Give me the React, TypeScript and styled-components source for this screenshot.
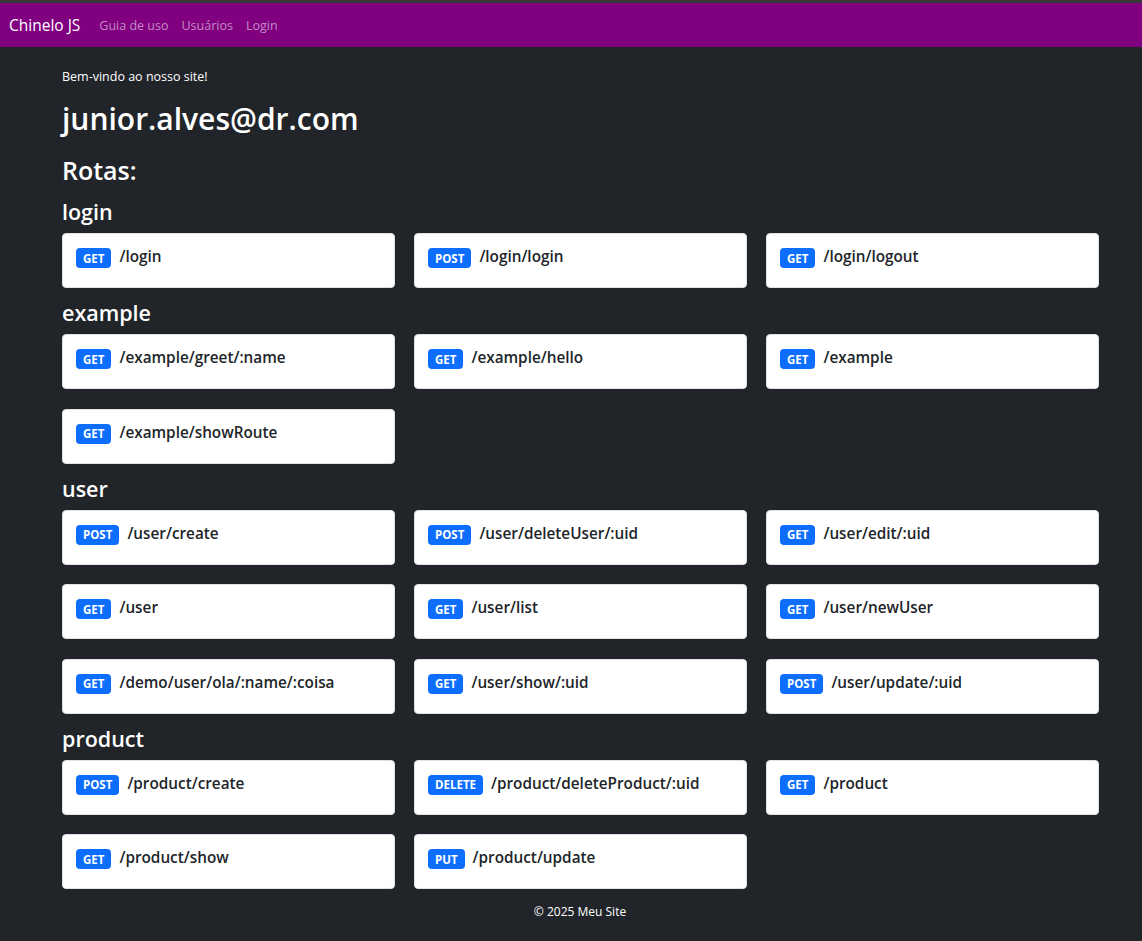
import React from "react";
import styled, { createGlobalStyle } from "styled-components";

const Global = createGlobalStyle`
  html, body { margin: 0; padding: 0; }
  body {
    background: #212529;
    color: #dee2e6;
    font-family: "Open Sans", "Noto Sans", sans-serif;
  }
  * { box-sizing: border-box; }
`;

const TopStrip = styled.div`
  height: 3px;
  background: #3a3a3a;
`;

const Navbar = styled.nav`
  height: 44px;
  background: #800080;
  display: flex;
  align-items: center;
  padding: 0 9px;
`;

const Brand = styled.a`
  color: #fff;
  font-size: 15.5px;
  margin-right: 19px;
  text-decoration: none;
`;

const NavLinks = styled.div`
  display: flex;
  gap: 13px;
`;

const NavLink = styled.a`
  color: rgba(255, 255, 255, 0.55);
  font-size: 12.5px;
  text-decoration: none;
`;

const Main = styled.main`
  padding: 21px 43px 0 62px;
`;

const Welcome = styled.p`
  margin: 0;
  font-size: 12.5px;
  line-height: 18px;
  color: #fff;
`;

const Email = styled.h1`
  margin: 14px 0 0;
  font-size: 30px;
  font-weight: 600;
  line-height: 38px;
  color: #fff;
`;

const RoutesTitle = styled.h2`
  margin: 15px 0 0;
  font-size: 25px;
  font-weight: 600;
  line-height: 34px;
  color: #fff;
`;

const GroupTitle = styled.h3`
  margin: 10px 0 7px;
  font-size: 21.5px;
  font-weight: 600;
  line-height: 29px;
  color: #fff;
`;

const Grid = styled.div`
  display: grid;
  grid-template-columns: repeat(3, 333px);
  column-gap: 19px;
  row-gap: 19.5px;
`;

const Card = styled.div`
  height: 55px;
  background: #fff;
  border: 1px solid #dee2e6;
  border-radius: 4px;
  padding: 13px 13px;
  display: flex;
  align-items: flex-start;
  gap: 8px;
`;

const Badge = styled.span`
  display: inline-flex;
  align-items: center;
  justify-content: center;
  height: 20px;
  margin-top: 1px;
  padding: 0 7px;
  background: #0d6efd;
  color: #fff;
  border-radius: 4px;
  font-size: 11.5px;
  font-weight: 700;
`;

const Path = styled.span`
  color: #212529;
  font-size: 15.3px;
  font-weight: 600;
  line-height: 19px;
`;

const Footer = styled.footer`
  text-align: center;
  font-size: 12px;
  color: #fff;
  padding: 14px 0 20px 18px;
  margin-left: -62px;
  margin-right: -43px;
`;

type Route = [string, string];

const groups: { name: string; routes: Route[] }[] = [
  {
    name: "login",
    routes: [
      ["GET", "/login"],
      ["POST", "/login/login"],
      ["GET", "/login/logout"],
    ],
  },
  {
    name: "example",
    routes: [
      ["GET", "/example/greet/:name"],
      ["GET", "/example/hello"],
      ["GET", "/example"],
      ["GET", "/example/showRoute"],
    ],
  },
  {
    name: "user",
    routes: [
      ["POST", "/user/create"],
      ["POST", "/user/deleteUser/:uid"],
      ["GET", "/user/edit/:uid"],
      ["GET", "/user"],
      ["GET", "/user/list"],
      ["GET", "/user/newUser"],
      ["GET", "/demo/user/ola/:name/:coisa"],
      ["GET", "/user/show/:uid"],
      ["POST", "/user/update/:uid"],
    ],
  },
  {
    name: "product",
    routes: [
      ["POST", "/product/create"],
      ["DELETE", "/product/deleteProduct/:uid"],
      ["GET", "/product"],
      ["GET", "/product/show"],
      ["PUT", "/product/update"],
    ],
  },
];

export default function App() {
  return (
    <>
      <Global />
      <TopStrip />
      <Navbar>
        <Brand>Chinelo JS</Brand>
        <NavLinks>
          <NavLink>Guia de uso</NavLink>
          <NavLink>Usuários</NavLink>
          <NavLink>Login</NavLink>
        </NavLinks>
      </Navbar>
      <Main>
        <Welcome>Bem-vindo ao nosso site!</Welcome>
        <Email>junior.alves@dr.com</Email>
        <RoutesTitle>Rotas:</RoutesTitle>
        {groups.map((g) => (
          <section key={g.name}>
            <GroupTitle>{g.name}</GroupTitle>
            <Grid>
              {g.routes.map(([m, p]) => (
                <Card key={m + p}>
                  <Badge>{m}</Badge>
                  <Path>{p}</Path>
                </Card>
              ))}
            </Grid>
          </section>
        ))}
        <Footer>© 2025 Meu Site</Footer>
      </Main>
    </>
  );
}
